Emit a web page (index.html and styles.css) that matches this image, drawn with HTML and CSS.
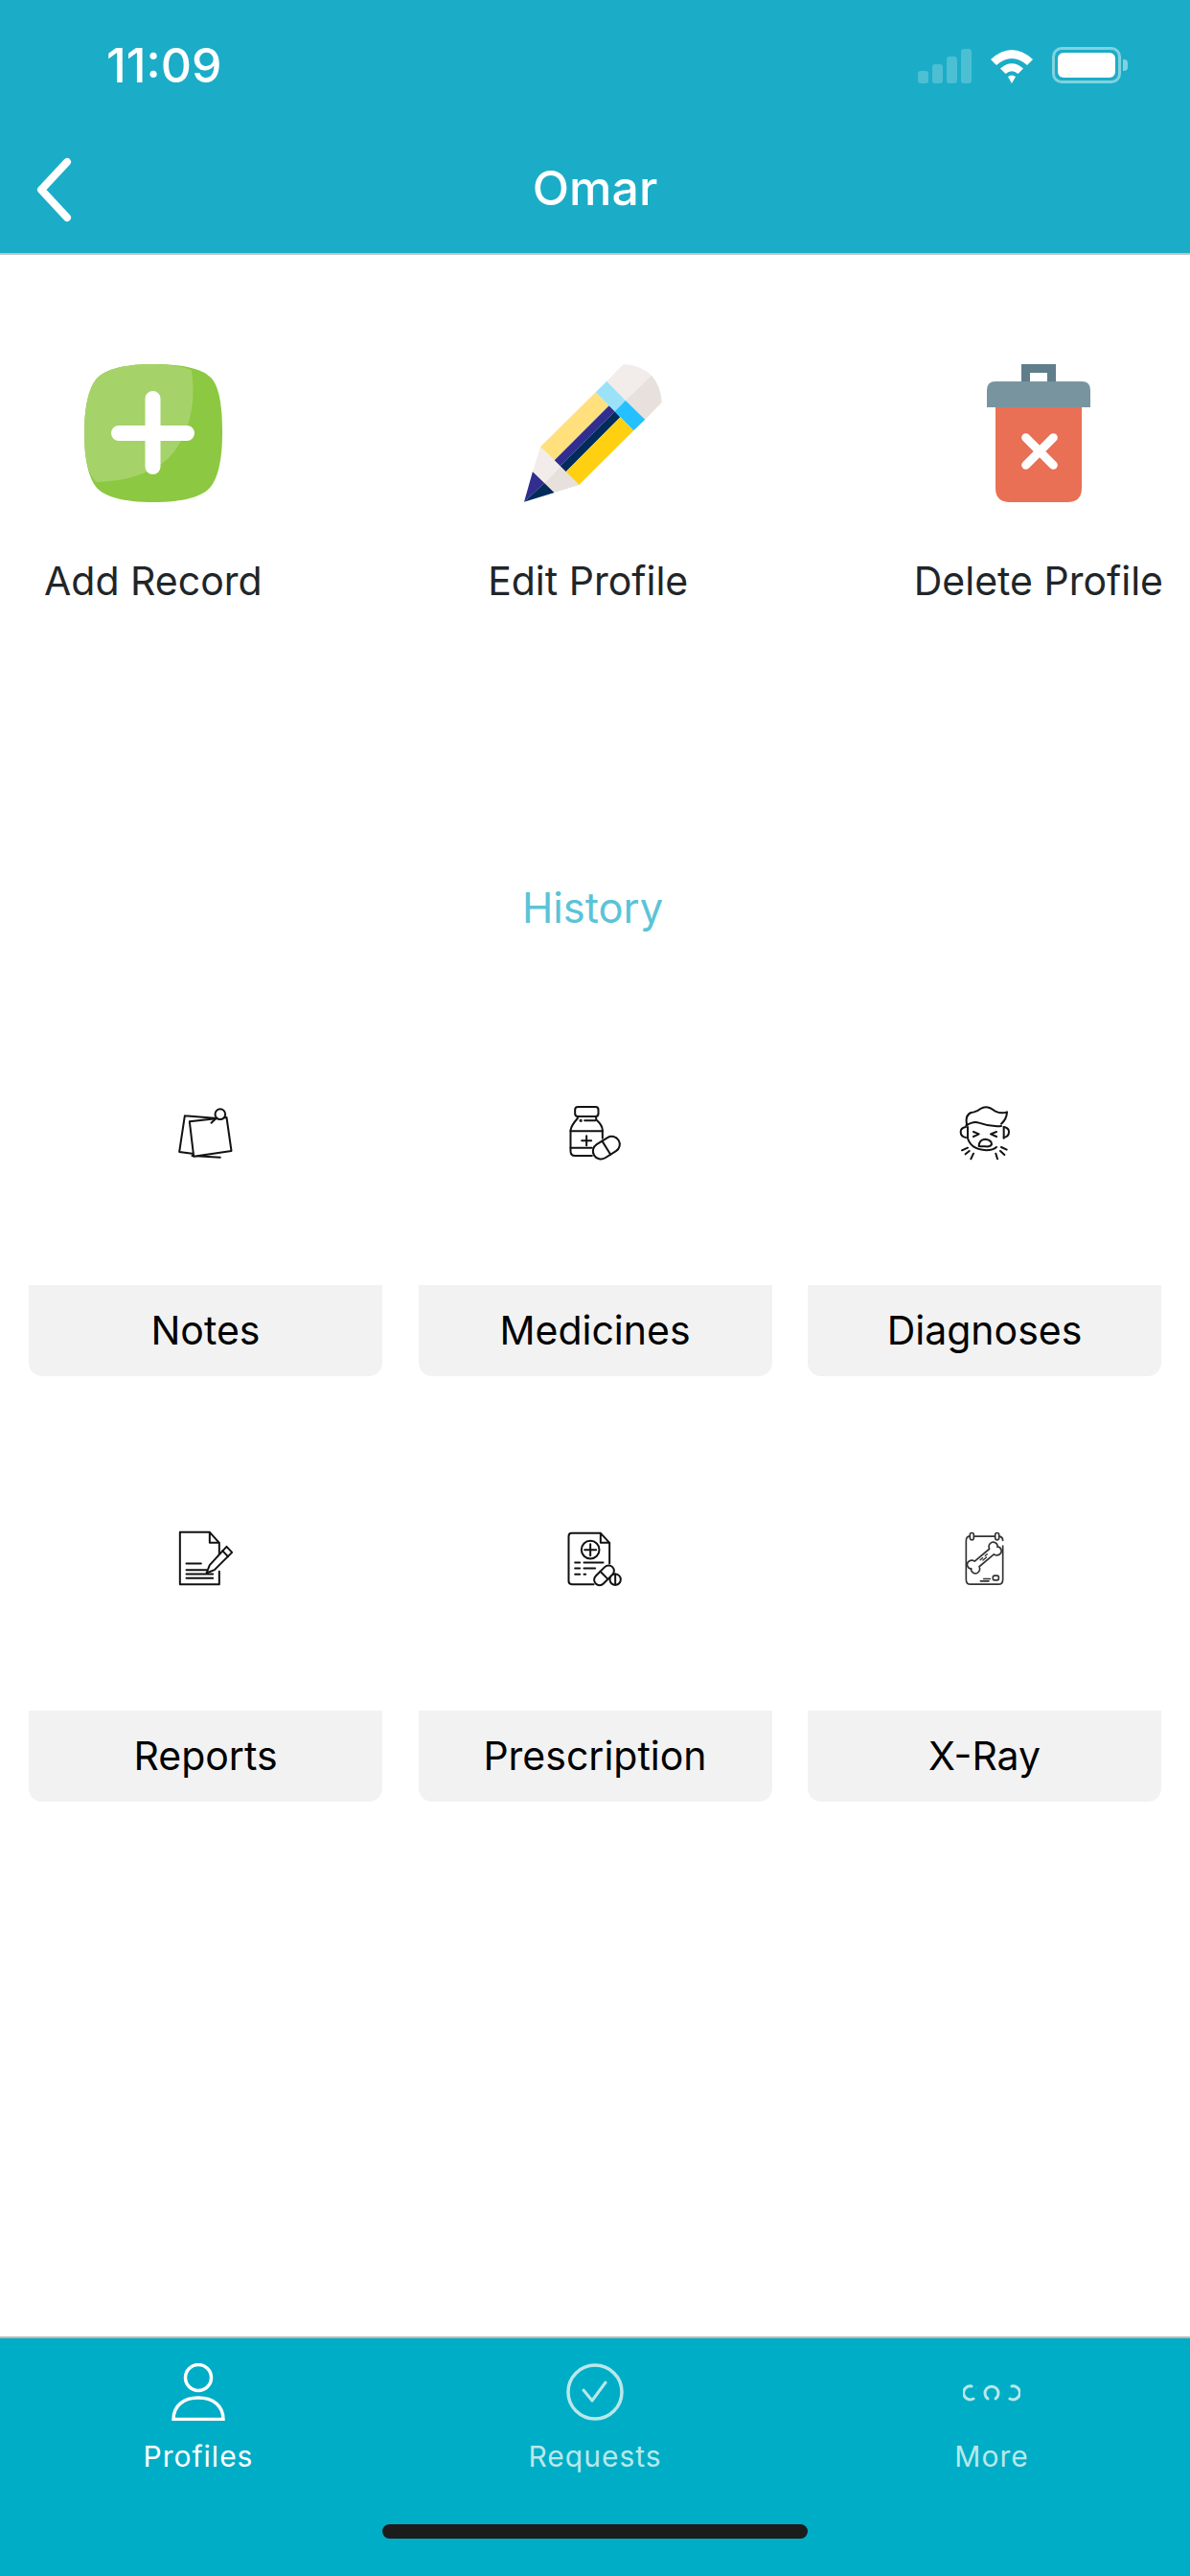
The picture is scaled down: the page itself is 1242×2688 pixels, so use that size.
FILE: index.html
```html
<!DOCTYPE html>
<html lang="en">
<head>
  <meta charset="UTF-8" />
  <meta name="viewport" content="width=device-width, initial-scale=1.0" />
  <title>Omar</title>
  <link rel="stylesheet" href="styles.css">
</head>
<body>
  <header class="topbar">
    <div class="status">
      <span class="time">11:09</span>
      <div class="status-icons">
        <div class="signal"><i></i><i></i><i></i><i></i></div>
        <svg class="wifi" width="48" height="38" viewBox="0 0 48 38">
          <path d="M2 13 Q24 -7 46 13 L40 19 Q24 5 8 19Z" fill="#fff"/>
          <path d="M12 22.500 Q24 12 36 22.500 L30.500 28 Q24 22.500 17.500 28Z" fill="#fff"/>
          <path d="M20 31 Q24 28 28 31 L24 38Z" fill="#fff"/>
        </svg>
        <div class="battery"><div class="battery-fill"></div></div>
      </div>
    </div>
    <div class="titlebar">
      <svg class="back" width="44" height="70" viewBox="0 0 44 70">
        <path d="M34 6 L7 35 L34 64" fill="none" stroke="#fff" stroke-width="8" stroke-linecap="round" stroke-linejoin="round"/>
      </svg>
      <h1>Omar</h1>
    </div>
  </header>

  <main>
    <section class="actions">
      <div class="action">
        <svg width="144" height="144" viewBox="0 0 144 144">
          <path d="M72 0C110 0 125 7 132 14C140 22 144 40 144 72C144 104 138 122 130 130C122 138 104 144 72 144C40 144 22 138 14 130C6 122 0 104 0 72C0 40 6 22 14 14C22 6 40 0 72 0Z" fill="#8cc841"/>
          <path d="M72 0C90 0 104 3 112 6C118 50 105 80 88 98C68 116 40 122 13 123C6 118 0 104 0 72C0 40 6 22 14 14C22 6 40 0 72 0Z" fill="#a6d26a"/>
          <path d="M36 72H107M71.500 36V107" stroke="#fff" stroke-width="16" stroke-linecap="round"/>
        </svg>
        <span>Add Record</span>
      </div>
      <div class="action">
        <svg class="pencil" width="144" height="144" viewBox="141 90 432 432">
          <path d="M141 521L168 426L205 462Z" fill="#312e8f"/>
          <path d="M141 521L205 462L236 492Z" fill="#002b5b"/>
          <path d="M192 349L168 426L205 462L255 410Z" fill="#f2edea"/>
          <path d="M205 462L236 492L313 468L255 410Z" fill="#e8e0dc"/>
          <path d="M192 349L365 178L407 220L236 391Z" fill="#ffe07d"/>
          <path d="M236 391L407 220L425 238L254 409Z" fill="#312e8f"/>
          <path d="M254 409L425 238L442 256L272 427Z" fill="#002b5b"/>
          <path d="M272 427L442 256L484 298L313 468Z" fill="#ffd012"/>
          <path d="M365 178L400 143L459 203L425 238Z" fill="#9be2f8"/>
          <path d="M425 238L459 203L520 263L484 298Z" fill="#25c0ff"/>
          <path d="M400 143L452 90Q505 92 540 125L459 203Z" fill="#f2edea"/>
          <path d="M459 203L540 125Q570 160 572 210L520 263Z" fill="#e8e0dc"/>
        </svg>
        <span>Edit Profile</span>
      </div>
      <div class="action">
        <svg width="108" height="144" viewBox="144 90 324 432">
          <path d="M252 144V90H360V144H333V117H279V144Z" fill="#607d8b"/>
          <path d="M144 225V171Q144 144 171 144H441Q468 144 468 171V225Z" fill="#78959f"/>
          <path d="M171 225H441V477Q441 522 396 522H216Q171 522 171 477Z" fill="#e96f55"/>
          <path d="M266 320L352 406M352 320L266 406" stroke="#fff" stroke-width="27" stroke-linecap="round"/>
        </svg>
        <span>Delete Profile</span>
      </div>
    </section>

    <h2 class="history-title">History</h2>

    <section class="history">
      <div class="record">
        <svg class="line-icon" width="110" height="90" viewBox="-1.500 0 330 270">
          <path d="M97 100L80 213L120 218M97 100L190 107M120 225L208 230"/>
          <path d="M112 118L228 105L243 210L125 227Z" fill="#fff"/>
          <circle cx="208" cy="95" r="16" fill="#fff"/>
          <path d="M195 108L180 122"/>
        </svg>
        <div class="record-name">Notes</div>
      </div>
      <div class="record">
        <svg class="line-icon" width="110" height="90" viewBox="-10.500 0 330 270">
          <rect x="92" y="72" width="73" height="30" rx="9"/>
          <path d="M100 102V108Q80 130 78 145V210Q78 225 92 225H145M158 102V112Q178 130 178 145V170"/>
          <path d="M78 148H178M78 200H145M113 178H143M128 163V193M122 115H155"/>
          <circle cx="110" cy="115" r="2"/>
          <g transform="rotate(-32 190 200)">
            <rect x="145" y="175" width="90" height="50" rx="25" fill="#fff"/>
            <path d="M190 175V225"/>
          </g>
        </svg>
        <div class="record-name">Medicines</div>
      </div>
      <div class="record">
        <svg class="line-icon" width="110" height="90" viewBox="-21 0 330 270">
          <path d="M88 130Q80 100 100 90Q118 88 130 78Q150 65 175 85Q195 95 213 88Q212 110 195 125"/>
          <path d="M85 130Q110 115 125 122Q160 135 195 132"/>
          <path d="M84 135Q68 138 68 150Q68 165 84 168M203 135Q219 138 219 150Q219 165 203 168"/>
          <path d="M90 135V170Q100 205 148 208Q170 207 180 198M203 135V170"/>
          <path d="M108 150L125 157L108 165M180 150L162 157L180 165"/>
          <path d="M125 195Q125 175 145 173Q165 175 165 190Q160 198 145 196Q130 196 125 195Z"/>
          <path d="M72 208L90 200M83 220L95 210M100 235L108 218M178 218L183 235M192 210L205 222M195 198L212 206"/>
        </svg>
        <div class="record-name">Diagnoses</div>
      </div>
      <div class="record">
        <svg class="line-icon" width="110" height="90" viewBox="-1.500 -19.500 330 270">
          <path d="M205 125V85L175 52H82V215H205V175M175 52V85H205"/>
          <path d="M102 150H148M102 170H165M102 183H185M102 196H185"/>
          <path d="M165 180L175 155L228 97L245 115L190 170Z" fill="#fff"/>
          <path d="M215 110L232 128"/>
        </svg>
        <div class="record-name">Reports</div>
      </div>
      <div class="record">
        <svg class="line-icon" width="110" height="90" viewBox="-10.500 -19.500 330 270">
          <path d="M200 150V85L172 55H82Q72 55 72 65V205Q72 215 82 215H150M172 55V85H200"/>
          <circle cx="140" cy="107" r="28"/>
          <path d="M122 107H158M140 89V125"/>
          <path d="M92 147H107M120 147H180M92 165H107M120 165H155M92 184H107M120 184H125"/>
          <g transform="rotate(-45 183 187)">
            <rect x="146" y="170" width="74" height="34" rx="17" fill="#fff"/>
            <path d="M183 170V204"/>
          </g>
          <circle cx="218" cy="200" r="17" fill="#fff"/>
          <path d="M218 183V217"/>
        </svg>
        <div class="record-name">Prescription</div>
      </div>
      <div class="record">
        <svg class="line-icon xray" width="110" height="90" viewBox="-21 -19.500 330 270">
          <path d="M200 95V200Q200 215 186 215H99Q85 215 85 200V80Q85 65 96 65M110 65H175M190 65Q200 68 200 78"/>
          <rect x="97" y="54" width="12" height="22" rx="6"/>
          <rect x="176" y="54" width="12" height="22" rx="6"/>
          <g transform="translate(142 132) rotate(-40)">
            <path d="M-30 -11C-34 -25 -52 -27 -57 -14C-59 -7 -57 -2 -53 0C-57 2 -59 7 -57 14C-52 27 -34 25 -30 11H30C34 25 52 27 57 14C59 7 57 2 53 0C57 -2 59 -7 57 -14C52 -27 34 -25 30 -11Z"/>
            <path d="M-14 -3H-4M6 -3H14M-8 3H6" stroke-width="4"/>
          </g>
          <path d="M140 198H160M130 205H156"/>
          <rect x="169" y="188" width="18" height="14" rx="5"/>
        </svg>
        <div class="record-name">X-Ray</div>
      </div>
    </section>
  </main>

  <footer class="tabbar">
    <nav class="tabs">
      <a class="tab active">
        <svg width="60" height="60" viewBox="0 0 60 60" fill="none" stroke="currentColor" stroke-width="3.500">
          <circle cx="30" cy="15" r="13.500"/>
          <path d="M4 58.500C4 44 15 36 30 36C45 36 56 44 56 58.500Z"/>
        </svg>
        <span>Profiles</span>
      </a>
      <a class="tab">
        <svg width="60" height="60" viewBox="0 0 60 60" fill="none" stroke="currentColor" stroke-width="3.500">
          <circle cx="30" cy="30" r="28"/>
          <path d="M18 28L27 39L41 20" stroke-width="3" stroke-linecap="round" stroke-linejoin="round"/>
        </svg>
        <span>Requests</span>
      </a>
      <a class="tab">
        <svg width="60" height="60" viewBox="0 0 60 60" fill="none" stroke="currentColor" stroke-width="3" stroke-linecap="round">
          <path d="M9 24A7 7 0 1 0 11 37"/>
          <path d="M26 37A7 7 0 1 1 34 37"/>
          <path d="M51 24A7 7 0 1 1 49 37"/>
        </svg>
        <span>More</span>
      </a>
    </nav>
    <div class="home-bar"></div>
  </footer>
</body>
</html>
```

FILE: styles.css
```css
body {
  font-family: Inter, 'Noto Sans', sans-serif;
  margin: 0;
  width: 1242px;
  height: 2688px;
  display: flex;
  flex-direction: column;
  background: #fff;
  color: #000;
  overflow: hidden;
}
.topbar {
  background-color: #1badc7;
  height: 264px;
  border-bottom: 2px solid #c4c4c4;
  color: #fff;
}
.status {
  display: flex;
  justify-content: space-between;
  align-items: center;
  height: 50px;
  padding: 43px 72px 0 111px;
}
.time {
  font-size: 50px;
  font-weight: 500;
}
.status-icons {
  display: flex;
  align-items: center;
  gap: 18px;
}
.signal {
  display: flex;
  align-items: flex-end;
  gap: 4px;
  height: 37px;
}
.signal i {
  display: block;
  width: 11px;
  background: rgba(255, 255, 255, 0.22);
  border-radius: 3px;
}
.signal i:nth-child(1) { height: 13px; }
.signal i:nth-child(2) { height: 20px; }
.signal i:nth-child(3) { height: 28px; }
.signal i:nth-child(4) { height: 36px; }
.battery {
  position: relative;
  box-sizing: border-box;
  width: 72px;
  height: 38px;
  border: 3px solid rgba(255, 255, 255, 0.45);
  border-radius: 10px;
  padding: 3px;
}
.battery::after {
  content: '';
  position: absolute;
  right: -10px;
  top: 10px;
  width: 5px;
  height: 12px;
  background: rgba(255, 255, 255, 0.45);
  border-radius: 0 4px 4px 0;
}
.battery-fill {
  height: 100%;
  background: #fff;
  border-radius: 6px;
}
.titlebar {
  display: flex;
  align-items: center;
  justify-content: center;
  position: relative;
  height: 78px;
  margin-top: 64px;
}
.back {
  position: absolute;
  left: 36px;
  top: 6px;
}
.titlebar h1 {
  margin: 0;
  font-size: 50px;
  font-weight: 500;
}
main {
  flex: 1;
}
.actions {
  display: flex;
  justify-content: space-between;
  padding: 114px 28px 0 46px;
}
.action {
  display: flex;
  flex-direction: column;
  align-items: center;
  gap: 52px;
  color: #212529;
  font-size: 41px;
  line-height: 60px;
}
.pencil {
  margin-left: 10px;
}
.history-title {
  margin: 281px 5px 0 0;
  text-align: center;
  color: #5bc3d8;
  font-size: 43.500px;
  font-weight: 400;
  line-height: 60px;
}
.history {
  display: grid;
  grid-template-columns: repeat(3, 369px);
  column-gap: 37.500px;
  row-gap: 0;
  padding: 154px 30px 0;
}
.record {
  display: flex;
  flex-direction: column;
  align-items: center;
  height: 443.500px;
}
.line-icon {
  fill: none;
  stroke: #111;
  stroke-width: 6;
  stroke-linecap: round;
  stroke-linejoin: round;
}
.xray {
  stroke: #333;
  stroke-width: 5;
}
.record-name {
  align-self: stretch;
  height: 95px;
  line-height: 95px;
  margin-top: 120px;
  text-align: center;
  font-size: 41px;
  background: #f2f2f2;
  border-radius: 0 0 14px 14px;
}
.tabbar {
  background-color: #00adc6;
  height: 250px;
  border-top: 2px solid #bdb8b8;
  box-sizing: border-box;
  display: flex;
  flex-direction: column;
  align-items: center;
}
.tabs {
  display: grid;
  grid-template-columns: repeat(3, 1fr);
  width: 100%;
  padding-top: 26px;
}
.tab {
  display: flex;
  flex-direction: column;
  align-items: center;
  color: #b9e8ea;
  font-size: 30px;
  letter-spacing: 1px;
  gap: 19px;
}
.tab.active {
  color: #fff;
}
.home-bar {
  width: 444px;
  height: 15px;
  margin-top: 53px;
  background: #1c1c1c;
  border-radius: 8px;
}
```
